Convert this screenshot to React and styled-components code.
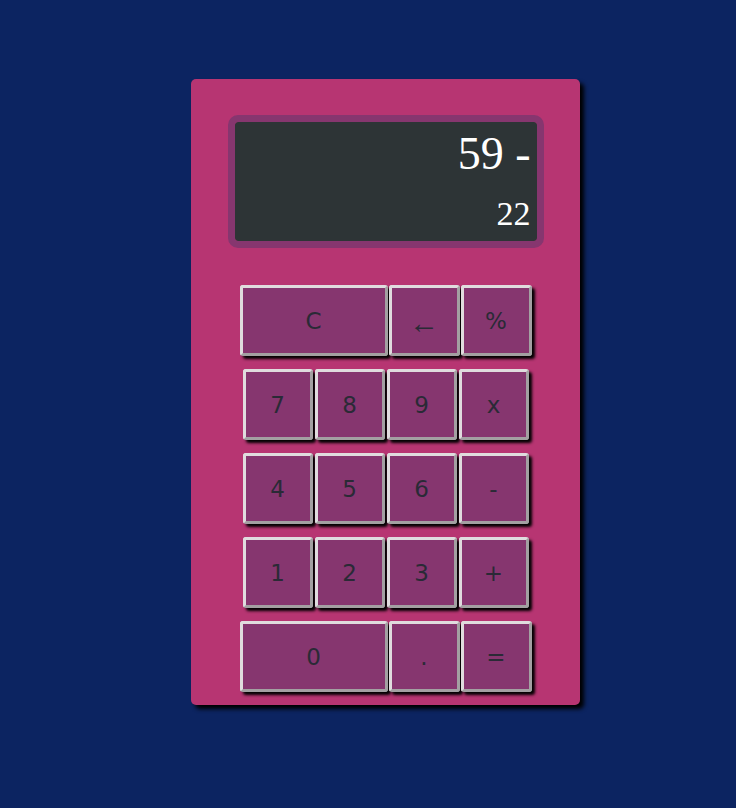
import styled, { createGlobalStyle } from "styled-components";

const GlobalStyle = createGlobalStyle`
	html, body {
		margin: 0;
		background-color: #0c2461;
	}
`;

const Page = styled.div`
	min-height: 808px;
	padding: 79px 0 0 191px;
	box-sizing: border-box;
`;

const Calculator = styled.div`
	width: 389px;
	height: 626px;
	box-sizing: border-box;
	background-color: #b73572;
	border-radius: 5px;
	box-shadow: 4px 4px 4px #000;
	padding-top: 36px;
	display: flex;
	flex-direction: column;
	align-items: center;
`;

const Display = styled.div`
	width: 316px;
	height: 133px;
	box-sizing: border-box;
	border: 7px solid #86366f;
	border-radius: 10px;
	background-color: #2d3436;
	background-clip: padding-box;
	display: flex;
	flex-direction: column;
	align-items: flex-end;
	padding: 5px 6px 0 0;
	font-family: "Liberation Serif", "Times New Roman", serif;
	color: #fff;
`;

const Expression = styled.div`
	font-size: 46px;
	line-height: 53px;
`;

const Current = styled.div`
	font-size: 34px;
	line-height: 39px;
	margin-top: 14px;
`;

const Keypad = styled.div`
	margin-top: 37px;
	display: flex;
	flex-direction: column;
	align-items: center;
	gap: 13px;
`;

const Row = styled.div`
	display: flex;
	gap: ${(props) => (props.$tight ? "1px" : "2px")};
`;

const Key = styled.button`
	width: ${(props) => props.$width}px;
	height: 71px;
	box-sizing: border-box;
	padding: ${(props) => (props.$serif ? "4px 0 0" : "0")};
	background-color: #86366f;
	color: #2a2a36;
	font-family: ${(props) =>
		props.$serif ? '"Liberation Serif", "Times New Roman", serif' : '"DejaVu Sans", Verdana, sans-serif'};
	font-size: ${(props) => (props.$serif ? "30px" : "23px")};
	border: 3px solid;
	border-color: #e0dcde #a3a0a2 #a3a0a2 #e0dcde;
	border-radius: 3px;
	box-shadow: 3px 3px 3px #000;
	cursor: pointer;
`;

const rows = [
	[{ label: "C", wide: true }, { label: "←", serif: true }, { label: "%" }],
	[{ label: "7" }, { label: "8" }, { label: "9" }, { label: "x" }],
	[{ label: "4" }, { label: "5" }, { label: "6" }, { label: "-" }],
	[{ label: "1" }, { label: "2" }, { label: "3" }, { label: "+" }],
	[{ label: "0", wide: true }, { label: "." }, { label: "=" }],
];

function App() {
	return (
		<Page>
			<GlobalStyle />
			<Calculator>
				<Display>
					<Expression>59 -</Expression>
					<Current>22</Current>
				</Display>
				<Keypad>
					{rows.map((row, i) => {
						const tight = row.length === 3;
						return (
							<Row key={i} $tight={tight}>
								{row.map((key) => (
									<Key
										key={key.label}
										$width={key.wide ? 148 : tight ? 71 : 70}
										$serif={key.serif}
									>
										{key.label}
									</Key>
								))}
							</Row>
						);
					})}
				</Keypad>
			</Calculator>
		</Page>
	);
}

export default App;
